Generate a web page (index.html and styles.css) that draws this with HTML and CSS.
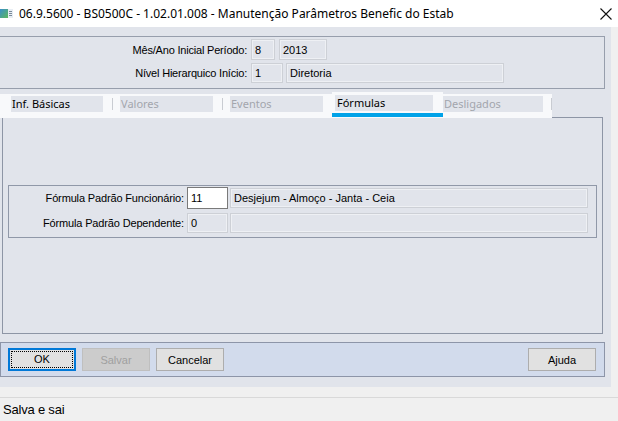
FILE: index.html
```html
<!DOCTYPE html>
<html lang="pt-BR">
<head>
    <meta charset="UTF-8">
    <meta name="viewport" content="width=device-width, initial-scale=1.0">
    <title>Manutenção Parâmetros Benefic do Estab</title>
    <link rel="stylesheet" href="styles.css">
</head>
<body>
    <div class="titlebar">
        <svg class="app-icon" width="13" height="9" viewBox="0 0 13 9">
            <defs>
                <linearGradient id="ig" x1="0" y1="0" x2="1" y2="1">
                    <stop offset="0" stop-color="#3a8fc9"/>
                    <stop offset="1" stop-color="#5cb85c"/>
                </linearGradient>
            </defs>
            <rect x="0" y="0" width="8" height="9" fill="url(#ig)"/>
            <rect x="8" y="0" width="5" height="9" fill="#e8eef4"/>
            <line x1="9" y1="2.5" x2="12" y2="2.5" stroke="#7a8a9a"/>
            <line x1="9" y1="4.5" x2="12" y2="4.5" stroke="#7a8a9a"/>
            <line x1="9" y1="6.5" x2="12" y2="6.5" stroke="#7a8a9a"/>
        </svg>
        <span class="title">06.9.5600 - BS0500C - 1.02.01.008 - Manutenção Parâmetros Benefic do Estab</span>
        <svg class="close" width="12" height="12" viewBox="0 0 12 12">
            <path d="M0.5 0.5 L11.5 11.5 M11.5 0.5 L0.5 11.5" stroke="#111" stroke-width="1.1"/>
        </svg>
    </div>

    <div class="window">
        <div class="header-box">
            <div class="field-row">
                <label>Mês/Ano Inicial Período:</label>
                <span class="box w-mes">8</span>
                <span class="box w-ano">2013</span>
            </div>
            <div class="field-row row-2">
                <label>Nível Hierarquico Início:</label>
                <span class="box w-nivel">1</span>
                <span class="box w-nivel-desc">Diretoria</span>
            </div>
        </div>

        <div class="tabs">
            <div class="tab tab-1">Inf. Básicas</div>
            <span class="sep"></span>
            <div class="tab disabled tab-2">Valores</div>
            <span class="sep"></span>
            <div class="tab disabled tab-3">Eventos</div>
            <div class="tab-active"><div class="tab">Fórmulas</div></div>
            <div class="tab disabled tab-5">Desligados</div>
            <span class="sep last"></span>
        </div>

        <div class="panel">
            <div class="group">
                <div class="form-row">
                    <label>Fórmula Padrão Funcionário:</label>
                    <span class="box w-cod editable">11</span>
                    <span class="box w-desc">Desjejum - Almoço - Janta - Ceia</span>
                </div>
                <div class="form-row">
                    <label>Fórmula Padrão Dependente:</label>
                    <span class="box w-cod">0</span>
                    <span class="box w-desc"></span>
                </div>
            </div>
        </div>

        <div class="actions">
            <button class="btn focused"><span>OK</span></button>
            <button class="btn" disabled><span>Salvar</span></button>
            <button class="btn"><span>Cancelar</span></button>
            <button class="btn help"><span>Ajuda</span></button>
        </div>
    </div>

    <div class="statusbar">Salva e sai</div>
</body>
</html>
```

FILE: styles.css
```css
body {
    margin: 0;
    width: 618px;
    height: 421px;
    overflow: hidden;
    background-color: #f0f0f0;
    font-family: "Liberation Sans", Arial, sans-serif;
    font-size: 11px;
    color: #000;
}
.titlebar {
    height: 27px;
    background-color: #fff;
    display: flex;
    align-items: center;
}
.title {
    margin-left: 6px;
    font-family: "Noto Sans", sans-serif;
    font-size: 12px;
    color: #000;
    flex: 1;
}
.close {
    margin-right: 6px;
}
.window {
    width: 611px;
    height: 360px;
    background-color: #e1e4eb;
    overflow: hidden;
}
.header-box {
    margin-top: 9px;
    margin-left: -1px;
    width: 604px;
    height: 51px;
    border: 1px solid #979eac;
}
.field-row {
    display: flex;
    align-items: center;
    height: 21px;
    margin-top: 2px;
}
.field-row.row-2 {
    height: 20px;
    margin-top: 3px;
}
.field-row label {
    width: 247px;
    text-align: right;
    margin-right: 4px;
    letter-spacing: -0.2px;
}
.box {
    box-sizing: border-box;
    height: 100%;
    display: flex;
    align-items: center;
    padding-left: 3px;
    border: 1px solid #cdd0d6;
    box-shadow: inset 0 0 0 1px #eef0f4;
    white-space: nowrap;
}
.w-mes { width: 24px; margin-right: 4px; }
.w-ano { width: 48px; }
.w-nivel { width: 32px; margin-right: 3px; }
.w-nivel-desc { width: 218px; }

.tabs {
    position: relative;
    z-index: 1;
    margin-top: 5px;
    width: 552px;
    height: 24px;
    box-sizing: border-box;
    padding-left: 11px;
    background-color: #f8f9fb;
    display: flex;
    align-items: flex-start;
    font-family: "Noto Sans", sans-serif;
    font-size: 11px;
}
.tabs > * {
    flex-shrink: 0;
}
.tab {
    box-sizing: border-box;
    height: 16px;
    margin-top: 2px;
    padding-left: 1px;
    background-color: #e1e4eb;
    line-height: 16px;
    white-space: nowrap;
}
.tab.disabled {
    color: #a3a6ad;
}
.tab-1 { width: 92px; }
.tab-2 { width: 93px; }
.tab-3 { width: 93px; margin-right: 9px; }
.tab-5 { width: 100px; }
.sep {
    width: 1px;
    height: 12px;
    margin: 4px 7px 0 9px;
    background-color: #c9ccd2;
}
.sep.last {
    margin: 4px 0 0 8px;
}
.tab-active {
    box-sizing: border-box;
    width: 111px;
    height: 26px;
    margin-top: -2px;
    padding-left: 3px;
    padding-top: 3px;
    background-color: #f8f9fb;
    position: relative;
}
.tab-active .tab {
    width: 98px;
    margin-top: 0;
    padding-left: 2px;
}
.tab-active::after {
    content: "";
    position: absolute;
    left: 0;
    right: 0;
    top: 21px;
    height: 4px;
    background-color: #00a2e8;
}

.panel {
    margin-top: -1px;
    margin-left: 2px;
    width: 601px;
    height: 217px;
    box-sizing: border-box;
    border: 1px solid #8d95a5;
    padding-top: 67px;
    padding-left: 5px;
}
.group {
    box-sizing: border-box;
    width: 589px;
    height: 53px;
    border: 1px solid #9098a8;
    padding-top: 1px;
}
.form-row {
    display: flex;
    align-items: center;
    height: 22px;
}
.form-row + .form-row {
    margin-top: 4px;
    height: 20px;
}
.form-row label {
    width: 175px;
    text-align: right;
    margin-right: 3px;
    letter-spacing: -0.15px;
}
.w-cod {
    width: 41px;
    margin-right: 2px;
}
.w-cod.editable {
    background-color: #fff;
    border: 1px solid #7a7a7a;
    box-shadow: none;
}
.w-desc {
    width: 358px;
    height: 20px;
}

.actions {
    margin-top: 8px;
    width: 605px;
    height: 35px;
    box-sizing: border-box;
    border: 1px solid #8d95a8;
    background-color: #d2dbec;
    display: flex;
    align-items: center;
    padding-left: 7px;
}
.btn {
    box-sizing: border-box;
    width: 68px;
    height: 23px;
    margin-right: 6px;
    background-color: #e1e1e1;
    border: 1px solid #adadad;
    font-family: "Liberation Sans", Arial, sans-serif;
    font-size: 11px;
    color: #000;
    padding: 0;
}
.btn:disabled {
    background-color: #cccccc;
    border-color: #bfbfbf;
    color: #a0a0a0;
}
.btn.focused {
    border: 2px solid #0078d7;
    padding: 1px;
}
.btn.focused span {
    display: block;
    height: 100%;
    line-height: 15px;
    border: 1px dotted #000;
    box-sizing: border-box;
}
.btn.help {
    margin-left: auto;
    margin-right: 8px;
}

.statusbar {
    margin-top: 10px;
    border-top: 1px solid #d9d9d9;
    padding: 4px 0 0 3px;
    font-size: 13px;
    letter-spacing: -0.2px;
}
```
